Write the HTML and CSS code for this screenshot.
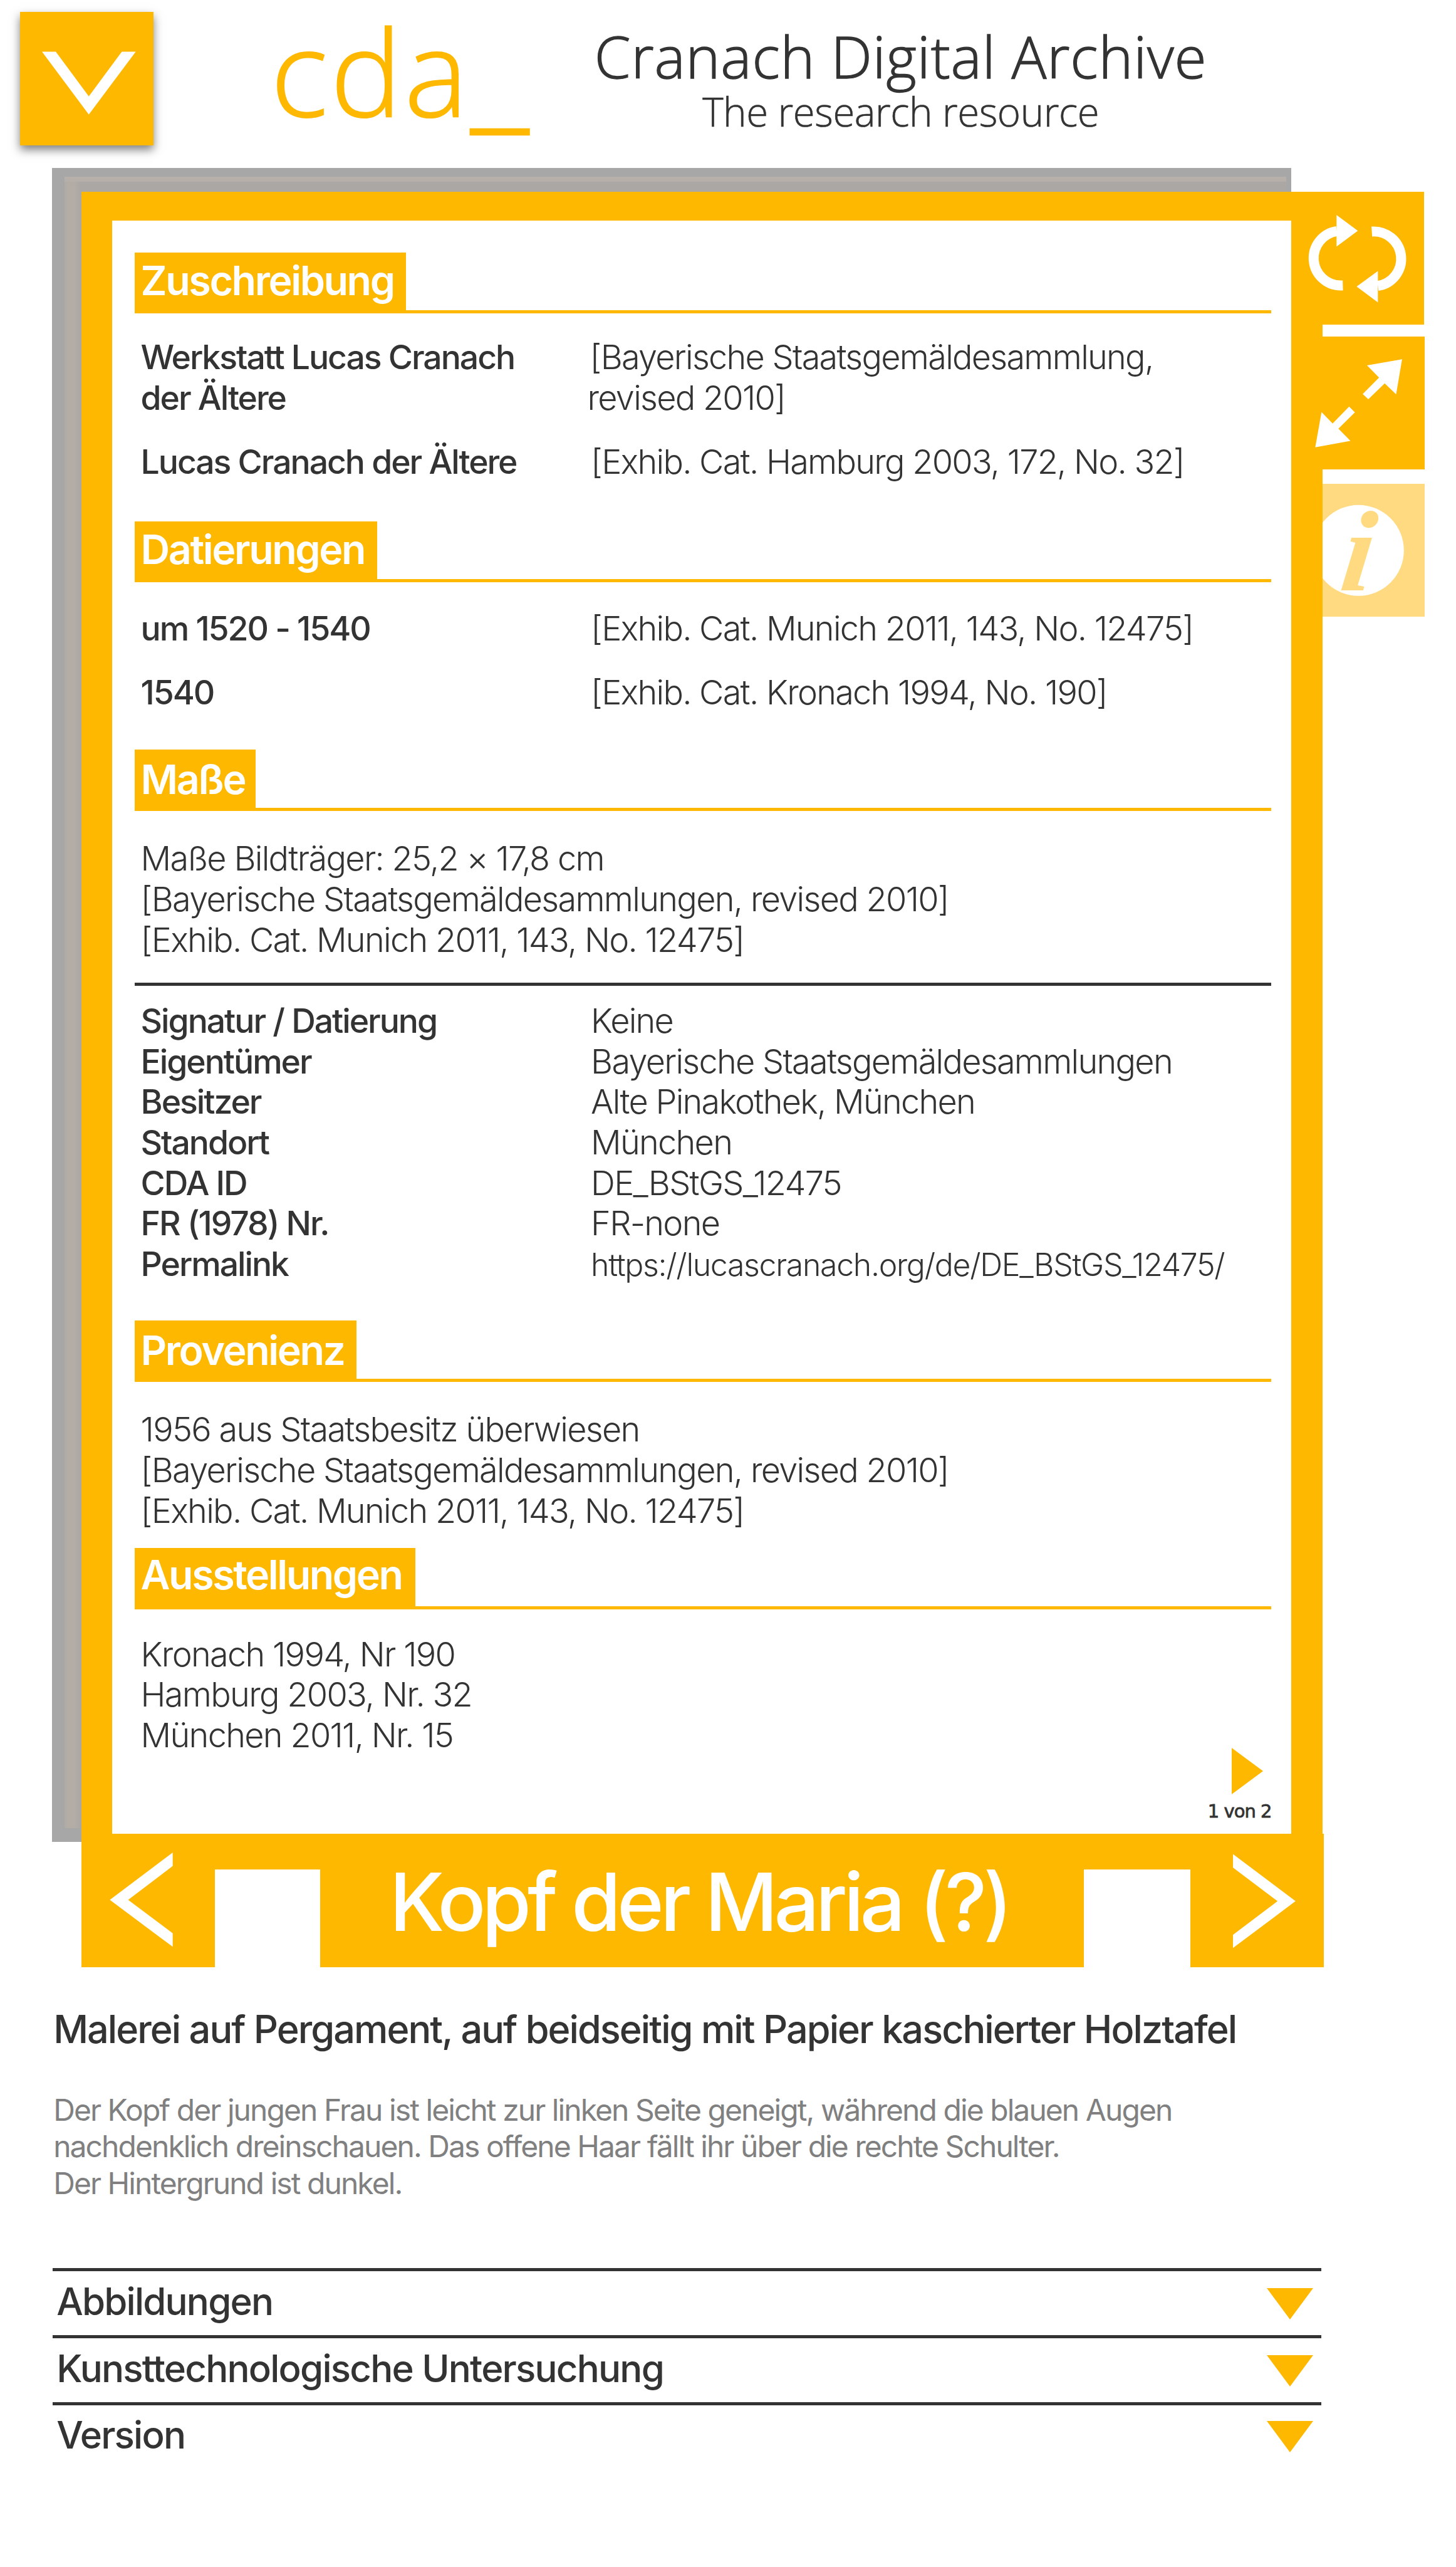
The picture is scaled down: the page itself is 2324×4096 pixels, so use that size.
FILE: index.html
```html
<!DOCTYPE html>
<html lang="de">
<head>
<meta charset="utf-8">
<title>Cranach Digital Archive</title>
<link rel="stylesheet" href="styles.css">
</head>
<body>
<header class="header">
  <button class="menu" aria-label="Menü">
    <svg viewBox="0 0 213 212"><path d="M35 63.5H57L109.6 134.5L162.2 63.5H184.4L109.6 163.5Z"/></svg>
  </button>
  <div class="logo">cda<span class="logo-bar">_</span></div>
  <div class="brand">
    <h1 class="brand-name">Cranach Digital Archive</h1>
    <p class="brand-claim">The research resource</p>
  </div>
</header>

<main class="stage">
  <div class="painting"></div>
  <div class="viewer">
    <article class="panel">
      <div class="sheet">
        <h2 class="head"><span>Zuschreibung</span></h2>
        <dl class="facts facts-spaced facts-attribution">
          <dt>Werkstatt Lucas Cranach<br>der Ältere</dt><dd class="hang">[Bayerische Staatsgemäldesammlung,<br>revised 2010]</dd>
          <dt>Lucas Cranach der Ältere</dt><dd>[Exhib. Cat. Hamburg 2003, 172, No. 32]</dd>
        </dl>
        <h2 class="head"><span>Datierungen</span></h2>
        <dl class="facts facts-spaced facts-dating">
          <dt>um 1520 - 1540</dt><dd>[Exhib. Cat. Munich 2011, 143, No. 12475]</dd>
          <dt>1540</dt><dd>[Exhib. Cat. Kronach 1994, No. 190]</dd>
        </dl>
        <h2 class="head head-size"><span>Maße</span></h2>
        <p class="note note-size">Maße Bildträger: 25,2 × 17,8 cm<br>[Bayerische Staatsgemäldesammlungen, revised 2010]<br>[Exhib. Cat. Munich 2011, 143, No. 12475]</p>
        <hr class="divider">
        <dl class="facts facts-list">
          <dt>Signatur / Datierung</dt><dd>Keine</dd>
          <dt>Eigentümer</dt><dd>Bayerische Staatsgemäldesammlungen</dd>
          <dt>Besitzer</dt><dd>Alte Pinakothek, München</dd>
          <dt>Standort</dt><dd>München</dd>
          <dt>CDA ID</dt><dd>DE_BStGS_12475</dd>
          <dt>FR (1978) Nr.</dt><dd>FR-none</dd>
          <dt>Permalink</dt><dd class="link">https://lucascranach.org/de/DE_BStGS_12475/</dd>
        </dl>
        <h2 class="head head-provenance"><span>Provenienz</span></h2>
        <p class="note note-provenance">1956 aus Staatsbesitz überwiesen<br>[Bayerische Staatsgemäldesammlungen, revised 2010]<br>[Exhib. Cat. Munich 2011, 143, No. 12475]</p>
        <h2 class="head head-exhibitions"><span>Ausstellungen</span></h2>
        <div class="last">
          <p class="note">Kronach 1994, Nr 190<br>Hamburg 2003, Nr. 32<br>München 2011, Nr. 15</p>
          <div class="pager">
            <svg class="pager-next" viewBox="0 0 50 74"><path d="M0 0L50 37L0 74Z"/></svg>
            <span class="pager-count">1 von 2</span>
          </div>
        </div>
      </div>
      <nav class="nav">
        <button class="nav-button" aria-label="Zurück"><svg viewBox="0 0 213 212"><path d="M145.5 30V51.5L74.5 105.4L145.5 158.6V180.2L45.3 105.4Z"/></svg></button>
        <h2 class="nav-title">Kopf der Maria (?)</h2>
        <button class="nav-button" aria-label="Weiter"><svg viewBox="0 0 213 212"><path d="M68 32.4V53.9L139 107.5L68 161V182L167.7 107.5Z"/></svg></button>
      </nav>
    </article>
    <div class="tabs">
      <button class="tab tab-turn" aria-label="Wenden">
        <svg viewBox="0 0 213 212"><path class="arc" d="M73 62.6A43.7 43.7 0 0 0 79.2 149.5L82.6 149.4M129 63.2A43.7 43.7 0 0 1 138.7 150"/><path d="M72.5 36.6L106.6 61.9L72.5 87.3ZM138.7 126.3L104.7 151.2L138.7 176.5Z"/></svg>
      </button>
      <button class="tab" aria-label="Vergrößern">
        <svg viewBox="0 0 213 212"><path d="M176.7 36.1L167.2 92.1L149 74.6L122.9 99.9L113.9 91.6L140 65.3L120.8 45.8ZM38.3 176.5L48.3 120.4L66 138.5L92.3 111.6L101.5 120.9L75.2 146.7L94.4 166.2Z"/></svg>
      </button>
      <button class="tab tab-info" aria-label="Information">
        <svg viewBox="0 0 213 212"><circle cx="107.2" cy="106.1" r="72.4"/><text transform="translate(75 170) skewX(-7)">i</text></svg>
      </button>
    </div>
  </div>
</main>

<section class="about">
  <h2 class="about-title">Malerei auf Pergament, auf beidseitig mit Papier kaschierter Holztafel</h2>
  <p class="about-text">Der Kopf der jungen Frau ist leicht zur linken Seite geneigt, während die blauen Augen<br>nachdenklich dreinschauen. Das offene Haar fällt ihr über die rechte Schulter.<br>Der Hintergrund ist dunkel.</p>
  <ul class="accordion">
    <li>Abbildungen<svg viewBox="0 0 74 50"><path d="M0 0H74L37 50Z"/></svg></li>
    <li>Kunsttechnologische Untersuchung<svg viewBox="0 0 74 50"><path d="M0 0H74L37 50Z"/></svg></li>
    <li>Version<svg viewBox="0 0 74 50"><path d="M0 0H74L37 50Z"/></svg></li>
  </ul>
</section>
</body>
</html>
```
FILE: styles.css
```css
* { box-sizing: border-box; margin: 0; padding: 0; }
html, body { width: 2324px; height: 4096px; overflow: hidden; }
body { background: #fff; color: #333; font-family: Inter, "Liberation Sans", sans-serif; font-feature-settings: "calt" 0, "liga" 0; }
button { border: 0; background: #ffb800; display: block; }
svg { display: block; fill: #fff; width: 100%; height: 100%; }
ul { list-style: none; }

/* Header */
.header { display: flex; height: 267.8px; padding-top: 19.4px; padding-left: 31.9px; font-family: "Open Sans", "Noto Sans", sans-serif; font-weight: 300; }
.menu { width: 213.3px; height: 212.3px; flex: none; box-shadow: 0 7px 14px rgba(0, 0, 0, .5); }
.logo { width: 520px; margin-left: 187px; color: #ffb800; font-size: 191px; line-height: 187.6px; letter-spacing: 4.5px; white-space: nowrap; -webkit-text-stroke: 2px #ffb800; }
.logo-bar { font-size: 226px; line-height: 0; letter-spacing: 0; -webkit-text-stroke: 2.5px #ffb800; }
.brand { display: flex; flex-direction: column; align-items: center; width: 971px; }
.brand-name { margin-top: 13.2px; font-size: 93px; line-height: 113px; font-weight: 300; letter-spacing: .85px; white-space: nowrap; -webkit-text-stroke: 1.3px #333; }
.brand-claim { font-size: 63.6px; line-height: 64.8px; letter-spacing: -.5px; white-space: nowrap; -webkit-text-stroke: .6px #333; }

/* Painting with the data panel in front of it */
.stage { display: grid; padding-left: 83px; }
.painting {
  grid-area: 1 / 1; width: 1978px; height: 2670.8px;
  border: solid #a7a7a7; border-width: 14px 8px 22px 20px;
  background:
    linear-gradient(#b7b0ab, #b5aea9) top / 100% 8px no-repeat,
    linear-gradient(90deg, #aeaaa6, #b4ada6 5px, #b3aca6 17px, #aba7a4 26px) padding-box;
}
.viewer { grid-area: 1 / 1; display: flex; align-items: flex-start; margin: 37.8px 0 0 46.8px; isolation: isolate; }
.panel { position: relative; z-index: 1; width: 1981.7px; flex: none; }
.sheet { height: 2620.9px; background: #fff; border: solid #ffb800; border-width: 46.7px 50.4px 0 49px; padding: 51.1px 32px 0 35.8px; }

.head { display: flex; height: 97.6px; border-bottom: 5px solid #ffb800; color: #fff; font-size: 64.5px; line-height: 90px; font-weight: 600; letter-spacing: -2.4px; }
.head span { height: 93px; padding: 0 19.5px 0 10px; background: #ffb800; }
.head-size, .head-provenance { line-height: 96px; }
.head-size span { padding-right: 17px; }
.head-exhibitions { line-height: 86px; }
.head-exhibitions span { padding-right: 21px; }

.facts { display: grid; grid-template-columns: 716px 1fr; padding-left: 10px; line-height: 65px; align-items: baseline; }
.facts dt { font-size: 53.5px; font-weight: 500; letter-spacing: -2.05px; }
.facts dd { font-size: 54px; font-weight: 300; letter-spacing: -1.74px; white-space: nowrap; padding-left: 2.5px; }
.facts .hang { padding-left: 0; text-indent: 4px; margin-left: -3px; }
.facts .link { font-size: 50px; letter-spacing: -1.33px; }
.facts-spaced { row-gap: 36.9px; }
.facts-attribution { margin: 36.7px 0 63px; }
.facts-dating { margin: 40.3px 0 59.6px; }
.facts-list { line-height: 64.6px; margin: 24.5px 0 57px; }
.note { font-size: 54px; font-weight: 300; line-height: 64.7px; letter-spacing: -1.7px; padding-left: 10px; }
.note-size { margin: 44.4px 0 35.4px; }
.note-provenance { margin: 44.2px 0 27px; }
.divider { height: 5px; border: 0; background: #333; }
.last { display: flex; justify-content: space-between; align-items: flex-start; padding-top: 39.8px; }
.pager { display: flex; flex-direction: column; align-items: flex-end; margin-top: 181.4px; }
.pager-next { width: 50px; height: 74px; margin-right: 13px; fill: #ffb800; }
.pager-count { font: 29px/36px "DejaVu Sans", sans-serif; letter-spacing: -1px; margin-top: 9px; -webkit-text-stroke: .8px #333; }

.nav { display: flex; width: 1983.4px; height: 212.2px; background: linear-gradient(#ffb800, #ffb800) top / 100% 57.1px no-repeat; }
.nav-button { width: 213.2px; height: 212.2px; flex: none; }
.nav-title { width: 1219.7px; margin: 0 169.3px 0 167.7px; padding-right: 9px; background: #ffb800; color: #fff; font-size: 127.4px; font-weight: 500; line-height: 219px; text-align: center; letter-spacing: -6px; }

.tabs { display: flex; flex-direction: column; margin-left: -50.5px; }
.tab { width: 213.3px; height: 212.4px; margin-bottom: 18.7px; position: relative; z-index: 2; }
.tab + .tab { margin-bottom: 23px; }
.tab-turn { width: 212.4px; }
.arc { fill: none; stroke: #fff; stroke-width: 16; }
.tab-info { z-index: 0; background: #ffda80; }
.tab-info text { fill: #ffda80; font: italic bold 183px "Liberation Serif", serif; }

/* Description */
.about { padding: 61.9px 215px 0 83.7px; }
.about-title { font-size: 61.2px; line-height: 74px; font-weight: 500; letter-spacing: -1.96px; white-space: nowrap; padding-left: 1.5px; }
.about-text { margin-top: 63.2px; padding-left: 1.5px; color: #808080; font-size: 48px; line-height: 58.5px; letter-spacing: -1.94px; white-space: nowrap; }
.accordion { margin-top: 105.7px; }
.accordion li { display: flex; justify-content: space-between; align-items: flex-start; height: 107px; border-top: 5px solid #333; padding: 0 13px 0 6.5px; font-size: 60px; line-height: 97px; font-weight: 500; letter-spacing: -1.78px; }
.accordion li:last-child { line-height: 94px; }
.accordion svg { width: 74px; height: 50px; margin-top: 27px; fill: #ffb800; }
.accordion li:last-child svg { margin-top: 25.5px; }
```
